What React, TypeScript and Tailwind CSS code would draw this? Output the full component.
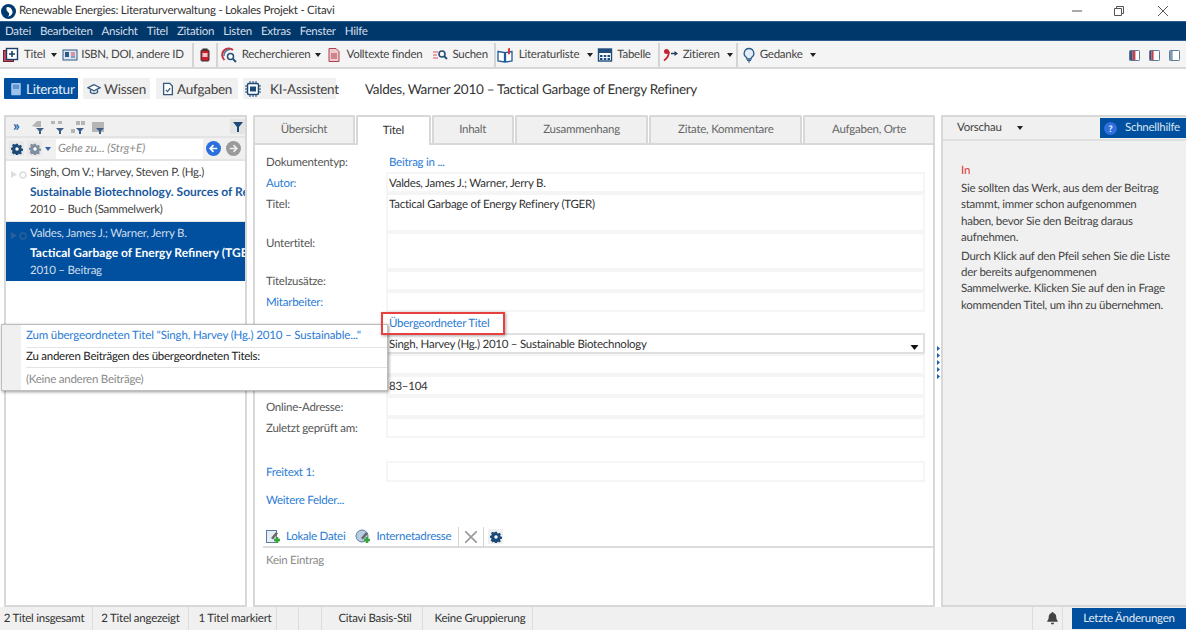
import type { ReactNode } from "react";

const Caret = ({ className = "text-[#222]" }: { className?: string }) => (
  <svg viewBox="0 0 6 4" className={`h-[4px] w-[6px] ${className}`}>
    <path d="M0 0h6L3 4z" fill="currentColor" />
  </svg>
);

const Sep = () => <div className="mx-[3px] h-[24px] w-[2px] bg-[#d4d4d4]" />;

function Ico({ children, className = "h-4 w-4" }: { children: ReactNode; className?: string }) {
  return (
    <svg viewBox="0 0 16 16" className={`shrink-0 ${className}`} fill="none">
      {children}
    </svg>
  );
}

const TitleIcon = () => (
  <Ico>
    <rect x="0.5" y="3.5" width="10" height="11" fill="#c9485b" stroke="#6b2430" />
    <rect x="3.5" y="1.5" width="11" height="11" fill="#fff" stroke="#1f3f66" strokeWidth="1.4" />
    <path d="M9 4v6M6 7h6" stroke="#1f3f66" strokeWidth="1.6" />
  </Ico>
);
const IdIcon = () => (
  <Ico>
    <rect x="1" y="3" width="14" height="10" fill="#dde6ef" stroke="#2b5a8a" />
    <rect x="3" y="5" width="4" height="5" fill="#2b5a8a" />
    <path d="M9 6h4M9 8h4" stroke="#c9485b" />
    <path d="M9 10h4" stroke="#2b5a8a" />
  </Ico>
);
const ClipIcon = () => (
  <Ico>
    <rect x="4" y="3" width="8" height="11" rx="1" fill="#c8202f" stroke="#333" />
    <rect x="5.5" y="1.5" width="5" height="2" fill="#333" />
    <rect x="5.5" y="6" width="5" height="4" fill="#f3c3c8" />
  </Ico>
);
const SearchWebIcon = () => (
  <Ico>
    <path d="M12 3A6.5 6.5 0 1 0 3.5 13" stroke="#c8323f" strokeWidth="2" />
    <path d="M9 2.5A6 6 0 0 0 3 9" stroke="#54779b" strokeWidth="1.5" />
    <circle cx="9.5" cy="9.5" r="3" fill="#fff" stroke="#264f7a" strokeWidth="1.5" />
    <path d="m12 12 3 3" stroke="#264f7a" strokeWidth="1.8" />
  </Ico>
);
const DocIcon = () => (
  <Ico>
    <path d="M3 1.5h7l3 3v10H3z" fill="#f2c9cc" stroke="#a8434f" />
    <path d="M5 7h6M5 9h6M5 11h6" stroke="#a8434f" />
  </Ico>
);
const FindIcon = () => (
  <Ico>
    <path d="M1 5h5M1 8h4M1 11h5" stroke="#d9505c" strokeWidth="1.2" />
    <circle cx="10" cy="7" r="3" stroke="#264f7a" strokeWidth="1.6" />
    <path d="m12 9 3 3" stroke="#264f7a" strokeWidth="1.8" />
  </Ico>
);
const BookIcon = () => (
  <Ico>
    <path d="M1 4.5 7.500 5.500V15L1 14zM15 4.500 8.500 5.500V15l6.500-1z" fill="#fff" stroke="#1f5c99" strokeWidth="1.3" />
    <path d="M11 1.500v6l2-.5V1z" fill="#d8323f" />
  </Ico>
);
const TableIcon = () => (
  <Ico>
    <rect x="1.5" y="2" width="13" height="12" fill="#fff" stroke="#1f4d7d" strokeWidth="1.4" />
    <rect x="1.5" y="2" width="13" height="4" fill="#1f4d7d" />
    <path d="M3 8h2.500v2H3zM6.800 8h2.500v2H6.800zM10.500 8H13v2h-2.500zM3 11h2.500v2H3zM6.800 11h2.500v2H6.800zM10.500 11H13v2h-2.500z" fill="#1f4d7d" />
  </Ico>
);
const CiteIcon = () => (
  <Ico>
    <circle cx="3.500" cy="4.500" r="2.500" fill="#c8202f" />
    <path d="M6 4.500c0 4-2 7-5 9" stroke="#c8202f" strokeWidth="1.800" />
    <path d="M8 6.500h5" stroke="#1f3f66" strokeWidth="1.500" />
    <path d="m11.500 4 3.500 2.500L11.500 9z" fill="#1f3f66" />
  </Ico>
);
const BulbIcon = () => (
  <Ico>
    <path d="M8 1.500a4.800 4.800 0 0 0-2.800 8.700c.5.500.8 1 .8 1.800h4c0-.8.300-1.300.8-1.800A4.800 4.800 0 0 0 8 1.500z" fill="#e4edf5" stroke="#2b5a8a" strokeWidth="1.300" />
    <path d="M6 13.500h4M7 15h2" stroke="#2b5a8a" strokeWidth="1.200" />
  </Ico>
);
const LayoutIcon = ({ red }: { red: number }) => (
  <svg viewBox="0 0 12 12" className="h-[11px] w-[11px] shrink-0">
    <rect x="0.500" y="0.500" width="11" height="11" rx="1" fill="#fff" stroke="#44688e" />
    {red === 2 && <rect x="1" y="1" width="3" height="10" fill="#34587f" />}
    {red === 2 && <rect x="4" y="1" width="3" height="10" fill="#c8404c" />}
    {red === 1 && <rect x="1" y="1" width="1.500" height="10" fill="#34587f" />}
    {red === 1 && <rect x="2.500" y="1" width="2.500" height="10" fill="#c8404c" />}
    {red === 0 && <rect x="1" y="1" width="3" height="10" fill="#7f9bb8" />}
  </svg>
);
const GearIcon = ({ color = "#1c4a78" }: { color?: string }) => (
  <svg viewBox="-1 -1 18 18" className="h-[12px] w-[12px]">
    <path
      d="M6.500 0h3l.4 2.200 1.500.7 1.900-1.200 2.100 2.100-1.200 1.900.7 1.500 2.100.3v3l-2.200.4-.7 1.500 1.200 1.900-2.100 2.100-1.900-1.200-1.500.6-.3 2.200h-3l-.4-2.200-1.500-.6-1.900 1.200L.1 12.800l1.200-1.900-.6-1.500L-1 9V6l2-.4.700-1.500L.5 2.200 2.600.1l1.900 1.200L6 .7z"
      fill={color}
    />
    <circle cx="8" cy="8" r="2.600" fill="#fff" />
  </svg>
);
const FunnelIcon = ({ color, pre }: { color: string; pre: ReactNode }) => (
  <Ico className="h-[16px] w-[16px]">
    {pre}
    <path d="M6 9h8l-3 3v3H9v-3z" fill={color} />
  </Ico>
);
const AddFileIcon = ({ globe }: { globe?: boolean }) => (
  <Ico>
    {globe ? (
      <circle cx="7" cy="7" r="6" fill="#b9cce0" stroke="#5b7ea3" />
    ) : (
      <rect x="1.500" y="1.500" width="10" height="12" fill="#e6edf4" stroke="#5b7ea3" />
    )}
    <path d="m6 9 5-6 2 1.500-5 6z" fill="#6a6a6a" />
    <path d="M9 11h6M12 8v6" stroke="#3aa33d" strokeWidth="2.600" />
  </Ico>
);

function ToolItem({ icon, label, caret, gap = "gap-[5px]", caretGap = "ml-0" }: { icon: ReactNode; label?: string; caret?: boolean; gap?: string; caretGap?: string }) {
  return (
    <div className={`flex items-center ${gap}`}>
      {icon}
      {label && <span className="whitespace-nowrap">{label}</span>}
      {caret && <Caret className={`${caretGap} text-[#222]`} />}
    </div>
  );
}

function NavButton({ icon, label, active, className }: { icon: ReactNode; label: string; active?: boolean; className: string }) {
  return (
    <div
      className={`flex h-[21px] items-center rounded-[1px] text-[13.500px] ${className} ${
        active ? "bg-[#00509f] text-[#e8eef6]" : "bg-[#f0f0f0] text-[#444]"
      }`}
    >
      {icon}
      <span className="whitespace-nowrap">{label}</span>
    </div>
  );
}

function Tab({ label, width, active }: { label: string; width: string; active?: boolean }) {
  return (
    <div
      className={`flex items-center justify-center rounded-t-[2px] border-x-2 border-t-2 border-[#d8d8d8] ${width} ${
        active ? "relative z-10 -mb-[2px] h-[30px] bg-white text-[#333]" : "h-[28px] bg-[#f0f0f0] text-[#666]"
      }`}
    >
      {label}
    </div>
  );
}

function Row({ label, link, height, children, strong }: { label?: string; link?: boolean; height: string; children?: ReactNode; strong?: boolean }) {
  return (
    <div className={`flex ${height}`}>
      <div className={`w-[120px] shrink-0 pt-[4px] ${link ? "text-[#2a7bd4]" : "text-[#555]"}`}>{label}</div>
      <div
        className={`flex flex-1 items-start pl-[1px] pt-[1.500px] text-[#333] ${
          strong ? "border-2 border-[#e0e0e0]" : "border-2 border-[#f5f5f5]"
        }`}
      >
        {children}
      </div>
    </div>
  );
}

function ListEntry({ a, b, c, selected }: { a: string; b: string; c: string; selected?: boolean }) {
  return (
    <div className={`relative shrink-0 overflow-hidden pl-[24px] pt-[3px] leading-[18.500px] ${selected ? "h-[59px] bg-[#00509f] text-[#cfdcea]" : "h-[60px] bg-white text-[#444]"}`}>
      <svg viewBox="0 0 17 10" className="absolute left-[5px] top-[9px] h-[10px] w-[17px]">
        <path d="M0 1l6 3.500L0 8z" fill={selected ? "#2a5f97" : "#ddd"} />
        <circle cx="12" cy="5" r="3" fill="none" stroke={selected ? "#2a5f97" : "#ddd"} strokeWidth="1.500" />
      </svg>
      <div className="whitespace-nowrap">{a}</div>
      <div className={`whitespace-nowrap text-[12px] font-bold tracking-normal ${selected ? "text-white" : "text-[#1a5aa0]"}`}>{b}</div>
      <div className="whitespace-nowrap">{c}</div>
    </div>
  );
}

function StatusCell({ label, width }: { label?: string; width: string }) {
  return <div className={`flex h-full items-center justify-center whitespace-nowrap border-r border-[#dcdcdc] ${width}`}>{label}</div>;
}

export default function App() {
  return (
    <div
      className="flex h-[630px] w-[1186px] flex-col overflow-hidden bg-white text-[11.500px] leading-[16px] tracking-[-0.25px] text-[#333] [text-rendering:geometricPrecision]"
      style={{ fontFamily: 'Lato, "Liberation Sans", sans-serif' }}
    >
      {/* title bar */}
      <div className="flex h-[21px] shrink-0 items-center pt-px">
        <svg viewBox="0 0 16 16" className="ml-[1px] mr-[3px] h-[15px] w-[15px]">
          <circle cx="8" cy="8" r="8" fill="#003a70" />
          <path d="M6 3.500a5 5 0 0 1 4 9l-2.500 1c1.500-2 1.500-3.500.5-4.500-1.500-1-3-3-2-5.500z" fill="#fff" />
        </svg>
        <span className="text-[#333]">Renewable Energies: Literaturverwaltung - Lokales Projekt - Citavi</span>
        <div className="ml-auto flex items-center">
          <svg viewBox="0 0 10 10" className="mr-[32px] h-[10px] w-[10px]">
            <path d="M0 5h10" stroke="#555" />
          </svg>
          <svg viewBox="0 0 10 10" className="mr-[34px] h-[10px] w-[10px]">
            <path d="M.500 2.500h7v7h-7zM2.500 2.500v-2h7v7h-2" fill="none" stroke="#555" />
          </svg>
          <svg viewBox="0 0 10 10" className="mr-[18px] h-[10px] w-[10px]">
            <path d="M0 0l10 10M10 0L0 10" stroke="#444" strokeWidth="0.900" />
          </svg>
        </div>
      </div>

      {/* menu */}
      <div className="flex h-[20px] shrink-0 items-center gap-[9px] border-y border-[#2b5d8f] bg-[#00386b] pl-[5px] pt-px text-[#d5deea]">
        {["Datei", "Bearbeiten", "Ansicht", "Titel", "Zitation", "Listen", "Extras", "Fenster", "Hilfe"].map((m) => (
          <span key={m}>{m}</span>
        ))}
      </div>

      {/* toolbar */}
      <div className="flex h-[28px] shrink-0 items-center border-b-2 border-[#d8d8d8] bg-[#f4f4f4] pl-[3px] pt-[2px] text-[#444]">
        <ToolItem icon={<TitleIcon />} label="Titel" caret caretGap="ml-px" />
        <div className="w-[5px]" />
        <ToolItem icon={<IdIcon />} label="ISBN, DOI, andere ID" gap="gap-[3px]" />
        <div className="w-[5px]" />
        <Sep />
        <ToolItem icon={<ClipIcon />} />
        <Sep />
        <ToolItem icon={<SearchWebIcon />} label="Recherchieren" caret />
        <div className="w-[5px]" />
        <ToolItem icon={<DocIcon />} label="Volltexte finden" gap="gap-[4px]" />
        <div className="w-[10px]" />
        <ToolItem icon={<FindIcon />} label="Suchen" gap="gap-[4px]" />
        <div className="w-[3px]" />
        <Sep />
        <div className="-ml-[2px]">
          <ToolItem icon={<BookIcon />} label="Literaturliste" caret gap="gap-[6px]" caretGap="ml-[2px]" />
        </div>
        <div className="w-[4px]" />
        <ToolItem icon={<TableIcon />} label="Tabelle" gap="gap-[4px]" />
        <div className="w-[4px]" />
        <Sep />
        <ToolItem icon={<CiteIcon />} label="Zitieren" caret gap="gap-[4px]" caretGap="ml-[3px]" />
        <Sep />
        <ToolItem icon={<BulbIcon />} label="Gedanke" caret gap="gap-[3px]" caretGap="ml-[4px]" />
        <div className="ml-auto mr-[6px] flex items-center gap-[9px]">
          <LayoutIcon red={2} />
          <LayoutIcon red={1} />
          <LayoutIcon red={0} />
        </div>
      </div>

      {/* section buttons and heading */}
      <div className="flex h-[46px] shrink-0 items-start pl-[4px] pt-[9px]">
        <NavButton
          active
          className="w-[74px] gap-[3px] pl-[5px]"
          label="Literatur"
          icon={
            <Ico className="h-[14px] w-[14px]">
              <rect x="2.500" y="1" width="11" height="14" rx="1" fill="#9cc3ea" />
              <rect x="4.500" y="3" width="7" height="5" fill="#5f95cc" />
            </Ico>
          }
        />
        <div className="w-[5px]" />
        <NavButton
          className="w-[67px] gap-[3px] pl-[4px]"
          label="Wissen"
          icon={
            <Ico className="h-[14px] w-[14px]">
              <path d="M8 3 1 6.500 8 10l7-3.500z" fill="#fff" stroke="#34587f" strokeWidth="1.500" />
              <path d="M4 9v3c2 1.500 6 1.500 8 0V9" stroke="#34587f" strokeWidth="1.500" />
            </Ico>
          }
        />
        <div className="w-[6px]" />
        <NavButton
          className="w-[82px] gap-[2px] pl-[5px]"
          label="Aufgaben"
          icon={
            <Ico className="h-[14px] w-[14px]">
              <path d="M3 1.500h7l3 3v10H3z" fill="#fff" stroke="#34587f" strokeWidth="1.500" />
              <path d="m5.500 9 2 2 3-4" stroke="#34587f" strokeWidth="1.400" />
            </Ico>
          }
        />
        <div className="w-[5px]" />
        <NavButton
          className="w-[93px] gap-[9px] pl-[2px]"
          label="KI-Assistent"
          icon={
            <Ico className="h-[16px] w-[16px]">
              <rect x="2.500" y="2.500" width="11" height="11" rx="1.500" fill="#fff" stroke="#1c4a78" strokeWidth="1.500" />
              <path d="M5 0v2M8 0v2M11 0v2M5 14v2M8 14v2M11 14v2M0 5h2M0 8h2M0 11h2M14 5h2M14 8h2M14 11h2" stroke="#1c4a78" />
              <rect x="5" y="5.500" width="6" height="5" fill="#1c4a78" />
            </Ico>
          }
        />
        <span className="ml-[29px] pt-px text-[13.500px] leading-[21px] tracking-[-0.28px] text-[#333]">Valdes, Warner 2010 – Tactical Garbage of Energy Refinery</span>
      </div>

      {/* panels */}
      <div className="relative flex min-h-0 flex-1 pl-[4px]">
        {/* reference list */}
        <div className="flex w-[243px] shrink-0 flex-col border-2 border-[#d8d8d8] bg-white">
          <div className="flex h-[21px] shrink-0 items-center border-b-2 border-[#e4e4e4] bg-[#f0f0f0] pl-[7px]">
            <span className="mr-[10px] w-[7px] text-[15px] font-bold leading-none text-[#1a5fb0]">»</span>
            <div className="flex gap-[4px]">
              <FunnelIcon color="#3b5f86" pre={<path d="M2 7l5-5h4v6H6z" fill="#b5b5b5" />} />
              <FunnelIcon color="#3b5f86" pre={<path d="M1 2h4v3H1zM8 2h4v3H8z" fill="#b5b5b5" />} />
              <FunnelIcon color="#3b5f86" pre={<path d="M1 10h4v4H1zM6 2h4v4H6zM11 2h4v4h-4z" fill="#b5b5b5" />} />
              <FunnelIcon color="#3b5f86" pre={<path d="M2 3h12v10H2z" fill="#b5b5b5" />} />
            </div>
            <div className="ml-auto flex h-[15px] w-[15px] items-center justify-center bg-[#e4e4e4]">
              <svg viewBox="0 0 10 10" className="h-[10px] w-[10px]">
                <path d="M0 0h10L6 5v5H4V5z" fill="#1c4a78" />
              </svg>
            </div>
          </div>
          <div className="flex h-[23px] shrink-0 items-center border-b-2 border-[#e4e4e4] bg-[#f0f0f0] pl-[3px]">
            <div className="flex h-[15px] w-[15px] items-center justify-center bg-[#e8e8e8]">
              <GearIcon />
            </div>
            <div className="ml-[3px] flex h-[15px] w-[15px] items-center justify-center bg-[#e8e8e8]">
              <GearIcon color="#7f8f9f" />
            </div>
            <Caret className="ml-[3px] text-[#2a62a5]" />
            <div className="ml-[5px] flex h-[20px] w-[147px] items-center bg-white pl-[2px] italic tracking-normal text-[#8a8a8a]">Gehe zu... (Strg+E)</div>
            <svg viewBox="0 0 16 16" className="ml-[3px] h-[15px] w-[15px]">
              <circle cx="8" cy="8" r="8" fill="#2b6fdc" />
              <path d="M12 8H5m3-3.500L4.500 8 8 11.500" stroke="#fff" strokeWidth="1.800" fill="none" />
            </svg>
            <svg viewBox="0 0 16 16" className="ml-[5px] h-[15px] w-[15px]">
              <circle cx="8" cy="8" r="8" fill="#9a9a9a" />
              <path d="M4 8h7M8 4.500 11.500 8 8 11.500" stroke="#eee" strokeWidth="1.800" fill="none" />
            </svg>
          </div>
          <ListEntry a="Singh, Om V.; Harvey, Steven P. (Hg.)" b="Sustainable Biotechnology. Sources of Renewable" c="2010 – Buch (Sammelwerk)" />
          <div className="h-[1px] shrink-0 bg-[#e4e4e4]" />
          <ListEntry selected a="Valdes, James J.; Warner, Jerry B." b="Tactical Garbage of Energy Refinery (TGER)" c="2010 – Beitrag" />
        </div>

        {/* detail panel */}
        <div className="ml-[6px] flex w-[682px] shrink-0 flex-col">
          <div className="flex h-[28px] shrink-0 items-start gap-px">
            <Tab label="Übersicht" width="w-[102px]" />
            <Tab label="Titel" width="w-[75px]" active />
            <Tab label="Inhalt" width="w-[82px]" />
            <Tab label="Zusammenhang" width="w-[134px]" />
            <Tab label="Zitate, Kommentare" width="w-[153px]" />
            <Tab label="Aufgaben, Orte" width="w-[132px]" />
          </div>
          <div className="flex min-h-0 flex-1 flex-col border-2 border-[#d8d8d8] bg-white pl-[11px] pr-[8px]">
            <div className="flex h-[27px] shrink-0 pt-[10px]">
              <span className="w-[123px] shrink-0 text-[#555]">Dokumententyp:</span>
              <span className="text-[#2a7bd4]">Beitrag in ...</span>
            </div>
            <Row label="Autor:" link height="h-[21px]">Valdes, James J.; Warner, Jerry B.</Row>
            <Row label="Titel:" height="h-[39px]">Tactical Garbage of Energy Refinery (TGER)</Row>
            <Row label="Untertitel:" height="h-[38px]" />
            <Row label="Titelzusätze:" height="h-[21px]" />
            <Row label="Mitarbeiter:" link height="h-[21px]" />
            <div className="flex h-[21px] shrink-0 items-center pl-[123px] pt-[2px] text-[#2a7bd4]">Übergeordneter Titel</div>
            <Row height="h-[21px]" strong>
              <div className="flex w-full items-center">
                <span>Singh, Harvey (Hg.) 2010 – Sustainable Biotechnology</span>
                <svg viewBox="0 0 8 5" className="ml-auto mr-[4px] mt-[5px] h-[5px] w-[9px]">
                  <path d="M0 0h8L4 5z" fill="#111" />
                </svg>
              </div>
            </Row>
            <Row height="h-[21px]" />
            <Row height="h-[21px]">83–104</Row>
            <Row label="Online-Adresse:" height="h-[21px]" />
            <Row label="Zuletzt geprüft am:" height="h-[21px]" />
            <div className="h-[23px] shrink-0" />
            <Row label="Freitext 1:" link height="h-[21px]" />
            <div className="shrink-0 pt-[11px] text-[#2a7bd4]">Weitere Felder...</div>
            <div className="-ml-[3px] -mr-[8px] mt-[18px] flex h-[21px] shrink-0 items-center border-b-2 border-[#dcdcdc] pl-[2px] text-[#2a7bd4]">
              <AddFileIcon />
              <span className="ml-[5px]">Lokale Datei</span>
              <span className="ml-[10px]"><AddFileIcon globe /></span>
              <span className="ml-[5px]">Internetadresse</span>
              <div className="ml-[7px] h-[20px] w-[1px] bg-[#d4d4d4]" />
              <svg viewBox="0 0 12 12" className="mx-[6px] h-[12px] w-[12px]">
                <path d="M0 0l12 12M12 0 0 12" stroke="#999" strokeWidth="1.600" />
              </svg>
              <div className="h-[20px] w-[1px] bg-[#d4d4d4]" />
              <div className="ml-[4px] flex h-[15px] w-[15px] items-center justify-center bg-[#f0f0f0]">
                <GearIcon />
              </div>
            </div>
            <div className="pt-[5px] text-[#8a8a8a]">Kein Eintrag</div>
          </div>
        </div>

        {/* splitter */}
        <div className="relative w-[6px] shrink-0">
          <div className="absolute left-[2px] top-[231px] flex flex-col gap-[2px]">
            {[0, 1, 2, 3, 4].map((i) => (
              <svg key={i} viewBox="0 0 3 5" className="h-[5px] w-[3px]">
                <path d="M0 0l3 2.500L0 5z" fill="#1a5fb0" />
              </svg>
            ))}
          </div>
        </div>

        {/* quick help */}
        <div className="flex min-w-0 flex-1 flex-col border-y-2 border-l-2 border-[#d8d8d8] bg-[#f0f0f0]">
          <div className="flex h-[24px] shrink-0 items-center border-b-2 border-[#e0e0e0] pl-[14px]">
            <span className="text-[#444]">Vorschau</span>
            <Caret className="ml-[15px] text-[#222]" />
            <div className="ml-auto flex h-[20px] w-[86px] items-center bg-[#00509f] pl-[4px] text-[#dbe5f0]">
              <svg viewBox="0 0 16 16" className="mr-[8px] h-[13px] w-[13px]">
                <circle cx="8" cy="8" r="8" fill="#2f6fe0" />
                <text x="8" y="12" textAnchor="middle" fontSize="11" fontWeight="700" fill="#fff">?</text>
              </svg>
              Schnellhilfe
            </div>
          </div>
          <div className="whitespace-nowrap pl-[18px] pt-[22px] leading-[16.200px] text-[#444]">
            <p className="mb-[2px] text-[#d33]">In</p>
            <p className="mb-[3px]">
              Sie sollten das Werk, aus dem der Beitrag
              <br />
              stammt, immer schon aufgenommen
              <br />
              haben, bevor Sie den Beitrag daraus
              <br />
              aufnehmen.
            </p>
            <p>
              Durch Klick auf den Pfeil sehen Sie die Liste
              <br />
              der bereits aufgenommenen
              <br />
              Sammelwerke. Klicken Sie auf den in Frage
              <br />
              kommenden Titel, um ihn zu übernehmen.
            </p>
          </div>
        </div>

        {/* red highlight and pop-up menu */}
        <div className="absolute left-[381px] top-[197px] z-20 h-[23px] w-[124px] border-2 border-[#e8403f] shadow-[1px_1px_3px_rgba(0,0,0,0.35)]" />
        <div className="absolute left-[1px] top-[209px] z-10 flex h-[67px] w-[387px] flex-col border border-[#bdbdbd] bg-white shadow-[1px_1px_3px_rgba(0,0,0,0.4)]">
          <div className="flex h-[22px] items-center pl-[24px]">
            <span className="tracking-[-0.15px] text-[#2a7bd4]">Zum übergeordneten Titel "Singh, Harvey (Hg.) 2010 – Sustainable..."</span>
          </div>
          <div className="ml-[24px] flex h-[22px] items-center border-y border-[#e4e4e4] text-[#222]">Zu anderen Beiträgen des übergeordneten Titels:</div>
          <div className="flex h-[22px] items-center pl-[24px] pt-[2px] text-[#8a8a8a]">(Keine anderen Beiträge)</div>
          <div className="absolute bottom-0 left-0 top-0 w-[19px] bg-[#f0f0f0]" />
        </div>
      </div>

      {/* status bar */}
      <div className="flex h-[23px] shrink-0 items-center bg-[#f0f0f0] text-[#333]">
        <StatusCell label="2 Titel insgesamt" width="w-[93px] pr-[4px]" />
        <StatusCell label="2 Titel angezeigt" width="w-[96px]" />
        <StatusCell label="1 Titel markiert" width="w-[88px] pl-[5px]" />
        <StatusCell width="w-[22px]" />
        <StatusCell width="w-[23px]" />
        <StatusCell label="Citavi Basis-Stil" width="w-[101px] pl-[6px]" />
        <StatusCell label="Keine Gruppierung" width="w-[110px] pl-[5px]" />
        <div className="ml-auto flex h-full items-center">
          <div className="flex h-full w-[31px] items-center justify-center border-x border-[#dcdcdc] pl-[9px]">
            <svg viewBox="0 0 12 12" className="h-[13px] w-[13px]">
              <path d="M6 0a1 1 0 0 1 1 1c2 .5 2.500 2.500 2.500 4 0 2 1.500 3 1.500 4H1c0-1 1.500-2 1.500-4 0-1.500.5-3.500 2.500-4a1 1 0 0 1 1-1zM4.500 10h3a1.500 1.500 0 0 1-3 0z" fill="#444" />
            </svg>
          </div>
          <div className="ml-[9px] flex h-[21px] w-[114px] items-center justify-center bg-[#00509f] text-[#e4ebf4]">Letzte Änderungen</div>
        </div>
      </div>
    </div>
  );
}
